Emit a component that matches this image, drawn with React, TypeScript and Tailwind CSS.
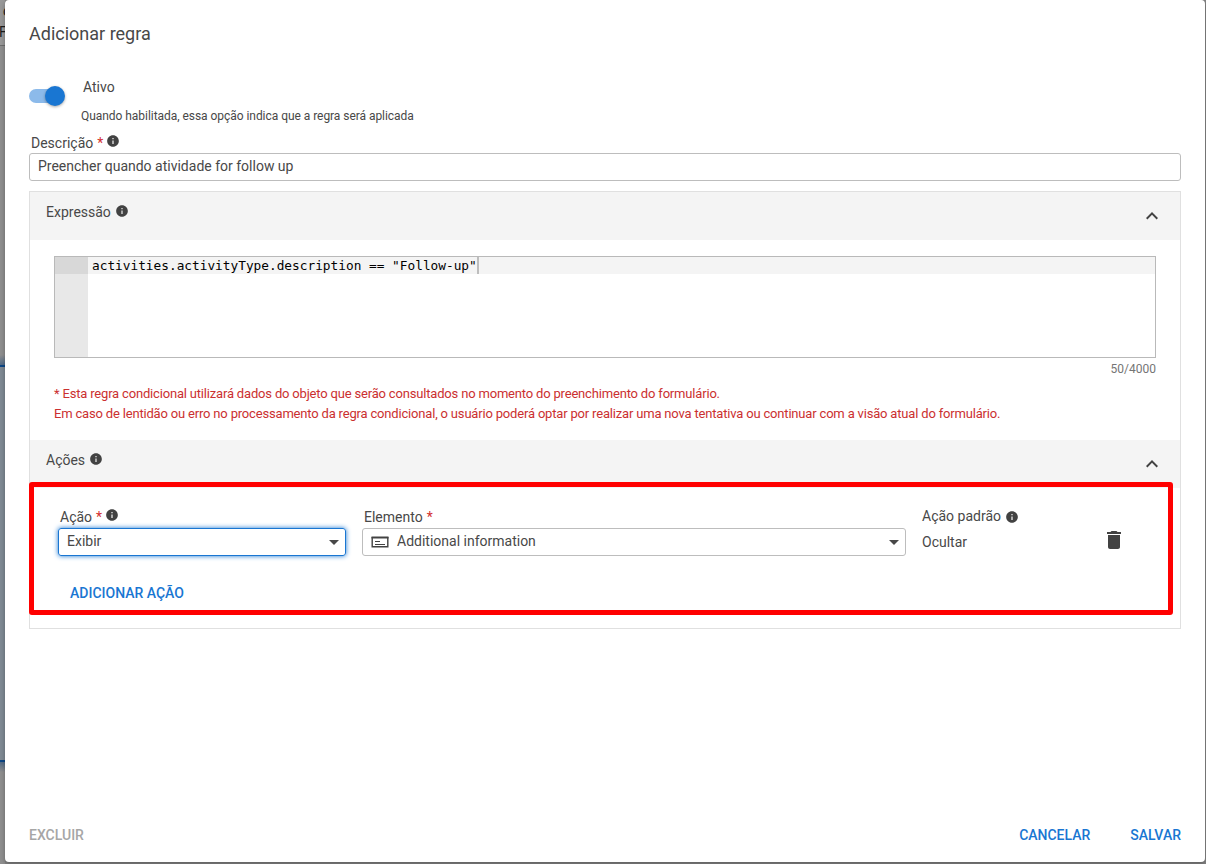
import React, { useState } from "react";
import { MdArrowDropDown, MdDelete, MdExpandLess, MdInfo } from "react-icons/md";

type LabelProps = {
  text: string;
  required?: boolean;
  info?: boolean;
  className?: string;
};

const FieldLabel = ({ text, required, info, className = "" }: LabelProps) => (
  <div className={`flex items-center h-5 text-sm leading-5 ${className}`}>
    <span>{text}</span>
    {required && <span className="ml-1 text-[#d32f2f]">*</span>}
    {info && <MdInfo className="ml-[3px] -mt-1 size-[14px] text-[#424242]" />}
  </div>
);

const SectionHeader = ({ title }: { title: string }) => (
  <div className="flex h-12 items-center justify-between bg-[#f4f4f4] px-4">
    <div className="flex items-center -mt-2 text-sm leading-5">
      <span>{title}</span>
      <MdInfo className="ml-1 -mt-[3px] size-[14px] text-[#424242]" />
    </div>
    <MdExpandLess className="size-6 text-[#424242]" />
  </div>
);

const InputIcon = () => (
  <svg
    width="18"
    height="12"
    viewBox="0 0 18 12"
    fill="none"
    className="-mt-px"
  >
    <path d="M0.5 1.5H17.5" stroke="#424242" strokeWidth="2" />
    <path d="M1.2 1V10.8H16.8V1" stroke="#424242" strokeWidth="1.4" />
    <path d="M4 5.5H9M4 8.5H14" stroke="#424242" strokeWidth="1" />
  </svg>
);

// The dimmed page that stays visible around the dialog
const PageEdge = () => (
  <div className="w-[5px] shrink-0 bg-[#8f8f8f] text-[#1c1c1c]">
    <div className="h-[46px] border-b border-[#6d6d6d] bg-[#999999] pt-[2px] text-sm leading-[18px]">
      <div className="pl-[3px]">c</div>
      <div className="-ml-px pt-[3px]">F</div>
    </div>
    <div className="h-[309px]" />
    <div className="h-[10px] bg-linear-to-b from-[#8f8f8f] to-[#516b88]" />
    <div className="h-[397px] border-y-2 border-[#0c4787] bg-[#7f8a94]" />
    <div className="h-[10px] bg-linear-to-b from-[#526b87] to-[#8f8f8f]" />
  </div>
);

export default function App() {
  const [active, setActive] = useState(true);
  const [description, setDescription] = useState(
    "Preencher quando atividade for follow up"
  );

  return (
    <div className="flex h-[864px] w-[1206px] overflow-hidden bg-[#858585] font-['Roboto',sans-serif] text-[#484848]">
      <PageEdge />
      <main className="relative flex h-[862px] w-[1200px] flex-col rounded bg-white px-6 shadow-[0_2px_5px_rgba(0,0,0,0.3)]">
        <h1 className="mt-[22px] text-lg leading-6">Adicionar regra</h1>

        <div className="mt-[31px] flex h-[56px]">
          <button
            type="button"
            role="switch"
            aria-checked={active}
            aria-label="Ativo"
            onClick={() => setActive(!active)}
            className="mt-[9px] flex h-5 w-9 items-center"
          >
            <span className="h-[14px] w-[34px] shrink-0 rounded-full bg-[#8cbaea]" />
            <span className="-ml-[18px] size-5 shrink-0 rounded-full bg-[#1976d2] shadow-[0_1px_3px_rgba(0,0,0,0.35)]" />
          </button>
          <div className="ml-4">
            <div className="ml-0.5 text-sm leading-5">Ativo</div>
            <p className="mt-[9px] text-xs leading-5 tracking-[-0.045px]">
              Quando habilitada, essa opção indica que a regra será aplicada
            </p>
          </div>
        </div>

        <FieldLabel text="Descrição" required info className="ml-0.5" />
        <input
          type="text"
          aria-label="Descrição"
          value={description}
          onChange={(e) => setDescription(e.target.value)}
          className="h-7 w-full rounded-[3px] border border-[#bdbdbd] px-2 pb-0.5 text-sm outline-none"
        />

        <div className="relative mt-[10px] h-[438px] border border-[#e0e0e0]">
          <SectionHeader title="Expressão" />
          <div className="h-[200px] px-6 pt-4">
            <div className="flex h-[102px] border border-[#b9b9b9]">
              <div className="w-[33px] bg-[#e8e8e8]">
                <div className="h-[17px] bg-[#d8d8d8]" />
              </div>
              <div className="flex-1">
                <div className="flex h-[17px] bg-[#f4f4f4] pl-1 font-['DejaVu_Sans_Mono',monospace] text-[12.79px] leading-[17px] text-black">
                  <span className="whitespace-pre">
                    {'activities.activityType.description == "Follow-up"'}
                  </span>
                  <span className="w-0.5 bg-[#bdbdbd]" />
                </div>
              </div>
            </div>
            <div className="text-right text-xs leading-[22px] text-[#757575]">
              50/4000
            </div>
            <p className="mt-1 text-[13px] leading-5 tracking-[-0.18px] text-[#cb3030]">
              * Esta regra condicional utilizará dados do objeto que serão
              consultados no momento do preenchimento do formulário.
              <br />
              Em caso de lentidão ou erro no processamento da regra condicional,
              o usuário poderá optar por realizar uma nova tentativa ou
              continuar com a visão atual do formulário.
            </p>
          </div>

          <SectionHeader title="Ações" />
          <div className="flex pl-7 pt-[19px]">
            <div className="w-72">
              <FieldLabel text="Ação" required info className="ml-0.5" />
              <div className="mt-[1px] flex h-7 items-center justify-between rounded-[3px] border border-[#1976d2] pl-2 text-sm shadow-[0_0_5px_#1976d2]">
                <span className="-mt-0.5">Exibir</span>
                <MdArrowDropDown className="-mr-px size-6" />
              </div>
            </div>
            <div className="ml-4 w-[544px]">
              <FieldLabel text="Elemento" required className="ml-0.5" />
              <div className="mt-[1px] flex h-7 items-center rounded-[3px] border border-[#bdbdbd] pl-2 text-sm">
                <InputIcon />
                <span className="-mt-0.5 ml-2 flex-1">
                  Additional information
                </span>
                <MdArrowDropDown className="-mr-px size-6" />
              </div>
            </div>
            <div className="ml-4 w-[180px]">
              <div className="-mt-px flex h-5 items-center text-sm">
                Ação padrão
                <MdInfo className="ml-1 mt-0.5 size-[14px] text-[#424242]" />
              </div>
              <div className="mt-[6px] text-sm leading-5">Ocultar</div>
            </div>
            <button
              type="button"
              aria-label="Remover ação"
              className="mt-[21px] h-6 text-[#424242]"
            >
              <MdDelete className="size-6" />
            </button>
          </div>
          <button
            type="button"
            className="ml-10 mt-[27px] block text-sm font-medium leading-5 text-[#1976d2]"
          >
            ADICIONAR AÇÃO
          </button>

          {/* highlight drawn over the actions block */}
          <div className="pointer-events-none absolute -left-px top-[290px] h-[133px] w-[1144px] rounded-[3px] border-5 border-[#ff0000]" />
        </div>

        <footer className="mb-[17px] mt-auto flex text-sm font-medium leading-5 text-[#1976d2]">
          <button type="button" disabled className="text-[#a6a6a6]">
            EXCLUIR
          </button>
          <button type="button" className="ml-auto">
            CANCELAR
          </button>
          <button type="button" className="ml-10">
            SALVAR
          </button>
        </footer>
      </main>
    </div>
  );
}
